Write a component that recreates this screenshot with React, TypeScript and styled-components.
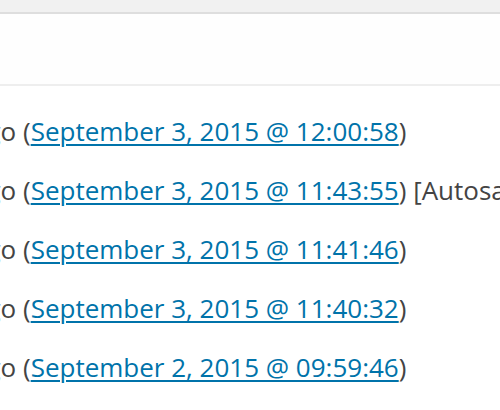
import React from "react";
import styled, { createGlobalStyle } from "styled-components";

const GlobalStyle = createGlobalStyle`
  html, body {
    margin: 0;
    padding: 0;
    background: #fff;
    overflow: hidden;
  }
  body {
    font-family: "Open Sans", "Liberation Sans", sans-serif;
    color: #444;
  }
`;

const Page = styled.div`
  width: 500px;
  height: 410px;
  overflow: hidden;
  background: #fff;
`;

const TopBar = styled.div`
  height: 12px;
  background: #f1f1f1;
  border-bottom: 2px solid #dedede;
`;

const Header = styled.div`
  height: 70px;
  background: #fefefe;
  border-bottom: 2px solid #eee;
`;

const RevisionList = styled.ul`
  list-style: none;
  margin: 0 0 0 -28px;
  padding: 16px 0 0;
  white-space: nowrap;
`;

const Row = styled.li`
  font-size: 26px;
  line-height: 59px;
  color: #444;
`;

const DateLink = styled.a`
  color: #0073aa;
  text-decoration: underline;
  text-underline-offset: 3px;
  text-decoration-thickness: 2px;
`;

const revisions = [
  { date: "September 3, 2015 @ 12:00:58" },
  { date: "September 3, 2015 @ 11:43:55", note: "[Autosave]" },
  { date: "September 3, 2015 @ 11:41:46" },
  { date: "September 3, 2015 @ 11:40:32" },
  { date: "September 2, 2015 @ 09:59:46" },
];

const App: React.FC = () => {
  return (
    <Page>
      <GlobalStyle />
      <TopBar />
      <Header />
      <RevisionList>
        {revisions.map((r) => (
          <Row key={r.date}>
            ago (<DateLink href="#">{r.date}</DateLink>)
            {r.note ? ` ${r.note}` : ""}
          </Row>
        ))}
      </RevisionList>
    </Page>
  );
};

export default App;
